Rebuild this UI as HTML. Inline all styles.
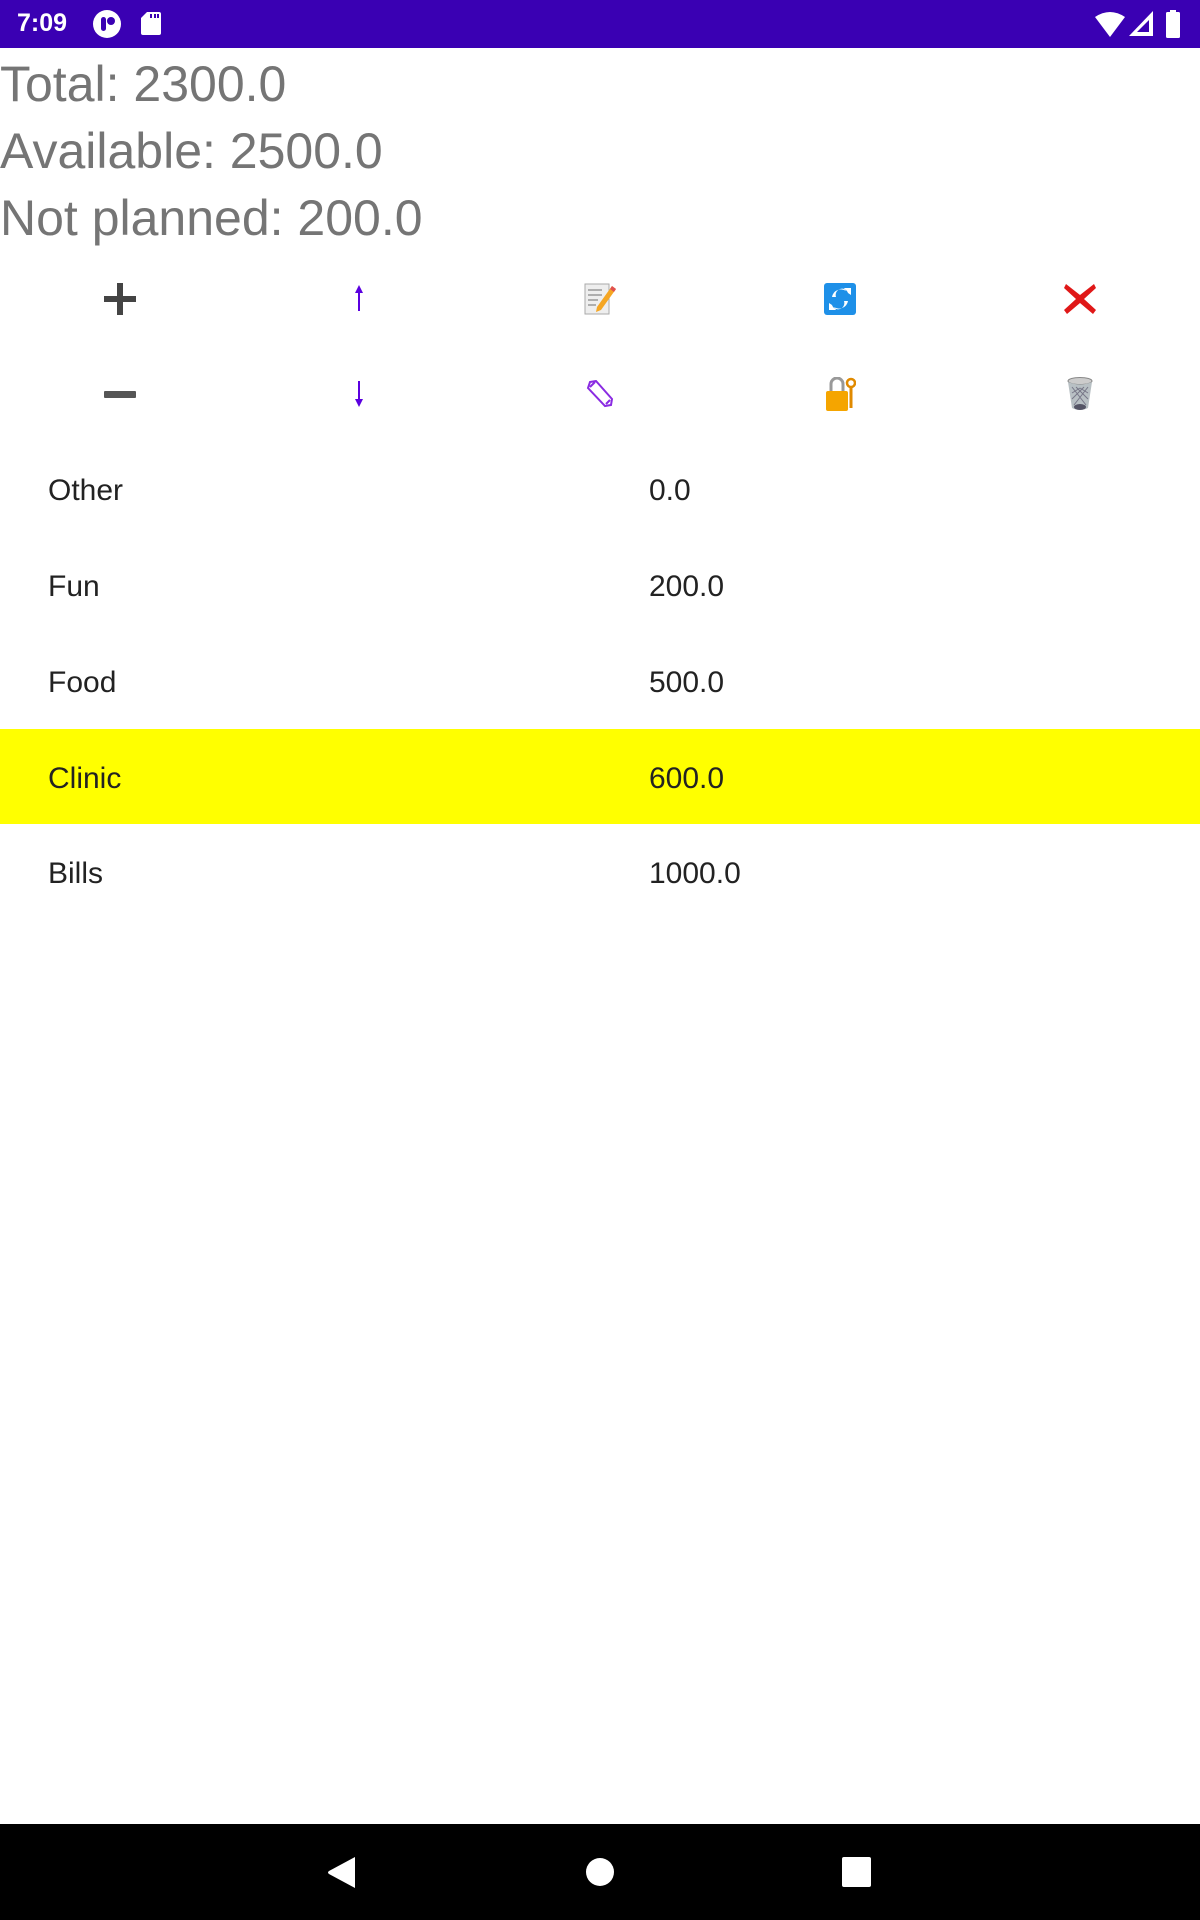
<!DOCTYPE html>
<html><head><meta charset="utf-8"><style>
html,body{margin:0;padding:0;width:1200px;height:1920px;background:#fff;overflow:hidden;position:relative;font-family:"Liberation Sans",sans-serif}
.abs{position:absolute}
.status{left:0;top:0;width:1200px;height:48px;background:#3a00b3}
.big{left:0;font-size:50px;color:#757575;line-height:1;white-space:nowrap}
.row{left:0;width:1200px;height:96px}
.row span{position:absolute;font-size:30px;color:#222;line-height:1}
.nav{left:0;top:1824px;width:1200px;height:96px;background:#000}
</style></head><body>
<div class="abs status">
  <div class="abs" style="left:17px;top:11px;font-size:25px;color:#fff;line-height:1;font-weight:bold">7:09</div>
  <svg class="abs" style="left:93px;top:10px" width="28" height="28" viewBox="0 0 28 28"><circle cx="14" cy="14" r="14" fill="#fff"/><rect x="8" y="7" width="5" height="14" rx="2.5" fill="#3a00b3"/><circle cx="18" cy="11" r="4" fill="#3a00b3"/></svg>
  <svg class="abs" style="left:141px;top:12px" width="20" height="23" viewBox="0 0 20 23"><path d="M6 0H18a2 2 0 0 1 2 2V21a2 2 0 0 1-2 2H2a2 2 0 0 1-2-2V6z" fill="#fff"/><rect x="9" y="2" width="2" height="4" fill="#3a00b3"/><rect x="13" y="2" width="2" height="4" fill="#3a00b3"/><rect x="16" y="2" width="2" height="4" fill="#3a00b3"/></svg>
  <svg class="abs" style="left:1095px;top:11px" width="30" height="26" viewBox="0 0 30 26"><path d="M0 6Q15 -4 30 6L15 26Z" fill="#fff"/></svg>
  <svg class="abs" style="left:1129px;top:11px" width="24" height="25" viewBox="0 0 24 25"><path d="M24 0V25H0Z" fill="#fff"/><path d="M20 9V21H8Z" fill="#3a00b3"/></svg>
  <svg class="abs" style="left:1166px;top:10px" width="14" height="28" viewBox="0 0 14 28"><rect x="4" y="0" width="6" height="3" fill="#fff"/><rect x="0" y="2" width="14" height="26" rx="1.5" fill="#fff"/></svg>
</div>
<div class="abs big" style="top:59px">Total: 2300.0</div>
<div class="abs big" style="top:126px">Available: 2500.0</div>
<div class="abs big" style="top:193px">Not planned: 200.0</div>

<svg class="abs" style="left:104px;top:283px" width="32" height="32" viewBox="0 0 32 32"><rect x="13" y="0" width="6" height="32" fill="#444"/><rect x="0" y="13" width="32" height="6" fill="#444"/></svg>
<svg class="abs" style="left:354px;top:285px" width="10" height="26" viewBox="0 0 10 26"><path d="M5 0L9 8H6V26H4V8H1Z" fill="#5b00e0"/></svg>
<svg class="abs" style="left:584px;top:283px" width="32" height="32" viewBox="0 0 32 32"><rect x="1" y="1" width="24" height="30" fill="#eee" stroke="#aaa"/><g stroke="#999" stroke-width="1.5"><line x1="4" y1="7" x2="18" y2="7"/><line x1="4" y1="12" x2="18" y2="12"/><line x1="4" y1="17" x2="14" y2="17"/><line x1="4" y1="22" x2="12" y2="22"/></g><path d="M28 3L32 6L17 27L12 29L13 24Z" fill="#f5a623"/><path d="M28 3L32 6L30 9L26 6Z" fill="#e05050"/></svg>
<svg class="abs" style="left:824px;top:283px" width="32" height="32" viewBox="0 0 32 32"><rect width="32" height="32" rx="3" fill="#1e90e8"/><path d="M8 14A9 9 0 0 1 22 8L20 5H27V12L24 10A6 6 0 0 0 12 14Z" fill="#fff"/><path d="M24 18A9 9 0 0 1 10 24L12 27H5V20L8 22A6 6 0 0 0 20 18Z" fill="#fff"/></svg>
<svg class="abs" style="left:1064px;top:283px" width="32" height="32" viewBox="0 0 32 32"><path d="M2 1L16 12L30 1L32 5L20 16L32 27L29 31L16 20L3 31L0 27L12 16L0 5Z" fill="#e01818"/></svg>
<svg class="abs" style="left:104px;top:391px" width="32" height="7" viewBox="0 0 32 7"><rect width="32" height="7" rx="1" fill="#555"/></svg>
<svg class="abs" style="left:354px;top:381px" width="10" height="26" viewBox="0 0 10 26"><path d="M5 26L9 18H6V0H4V18H1Z" fill="#5b00e0"/></svg>
<svg class="abs" style="left:586px;top:380px" width="28" height="28" viewBox="0 0 28 28"><path d="M4 2L10 1L26 19L25 25L19 26L2 8Z" fill="none" stroke="#8a2be2" stroke-width="2"/><line x1="4" y1="7" x2="9" y2="2" stroke="#8a2be2" stroke-width="2"/><line x1="20" y1="24" x2="24" y2="20" stroke="#8a2be2" stroke-width="2"/></svg>
<svg class="abs" style="left:824px;top:377px" width="32" height="34" viewBox="0 0 32 34"><path d="M7 14V7A6 6 0 0 1 19 7V14" fill="none" stroke="#999" stroke-width="3"/><rect x="2" y="14" width="22" height="20" rx="2" fill="#f5a500"/><circle cx="27" cy="6" r="4" fill="none" stroke="#e08a00" stroke-width="2.5"/><rect x="25.5" y="9" width="3" height="22" fill="#e08a00"/></svg>
<svg class="abs" style="left:1066px;top:377px" width="28" height="34" viewBox="0 0 28 34"><ellipse cx="14" cy="4" rx="12" ry="3.5" fill="#ccc" stroke="#888"/><path d="M2 5L6 31Q14 35 22 31L26 5Q14 10 2 5Z" fill="#b8c0c4"/><path d="M6 10L20 28M10 10L22 22M14 11L22 16M22 10L8 28M18 10L6 22M14 11L6 16" stroke="#778" stroke-width="1"/><ellipse cx="14" cy="30" rx="6" ry="3" fill="#556"/></svg>

<div class="abs row" style="top:442px"><span style="left:48px;top:34px">Other</span><span style="left:649px;top:34px">0.0</span></div>
<div class="abs row" style="top:538px"><span style="left:48px;top:34px">Fun</span><span style="left:649px;top:34px">200.0</span></div>
<div class="abs row" style="top:634px"><span style="left:48px;top:34px">Food</span><span style="left:649px;top:34px">500.0</span></div>
<div class="abs row" style="top:729px;height:95px;background:#ffff00"><span style="left:48px;top:35px">Clinic</span><span style="left:649px;top:35px">600.0</span></div>
<div class="abs row" style="top:825px"><span style="left:48px;top:34px">Bills</span><span style="left:649px;top:34px">1000.0</span></div>

<div class="abs nav">
  <svg class="abs" style="left:327px;top:32px" width="30" height="33" viewBox="0 0 30 33"><path d="M28 1L2 15Q0 16.5 2 18L28 32Z" fill="#fff"/></svg>
  <div class="abs" style="left:586px;top:34px;width:28px;height:28px;border-radius:50%;background:#fff"></div>
  <div class="abs" style="left:842px;top:33px;width:29px;height:30px;border-radius:2px;background:#fff"></div>
</div>
</body></html>
